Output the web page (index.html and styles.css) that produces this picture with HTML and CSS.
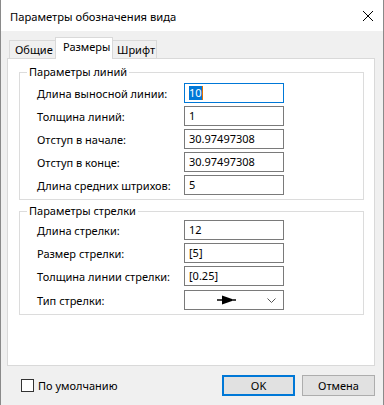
FILE: index.html
```html
<!DOCTYPE html>
<html lang="ru">
<head>
    <meta charset="UTF-8">
    <title>Параметры обозначения вида</title>
    <link rel="stylesheet" href="styles.css">
</head>
<body>

    <div class="window">
        <div class="titlebar">
            <span class="title">Параметры обозначения вида</span>
            <svg class="close" width="12" height="12" viewBox="0 0 12 12">
                <path d="M1 1 L11 11 M11 1 L1 11" stroke="#000" stroke-width="1" fill="none"/>
            </svg>
        </div>

        <div class="content">
            <!-- Tabs -->
            <div class="tabs">
                <div class="tab tab-first">Общие</div>
                <div class="tab active">Размеры</div>
                <div class="tab tab-last">Шрифт</div>
            </div>

            <div class="panel">
                <fieldset class="group group-lines">
                    <legend>Параметры линий</legend>
                    <div class="row">
                        <label>Длина выносной линии:</label>
                        <div class="field focused"><span class="selected">10</span><span class="caret"></span></div>
                    </div>
                    <div class="row">
                        <label>Толщина линий:</label>
                        <div class="field">1</div>
                    </div>
                    <div class="row">
                        <label>Отступ в начале:</label>
                        <div class="field">30.97497308</div>
                    </div>
                    <div class="row">
                        <label>Отступ в конце:</label>
                        <div class="field">30.97497308</div>
                    </div>
                    <div class="row">
                        <label>Длина средних штрихов:</label>
                        <div class="field">5</div>
                    </div>
                </fieldset>

                <fieldset class="group group-arrow">
                    <legend>Параметры стрелки</legend>
                    <div class="row">
                        <label>Длина стрелки:</label>
                        <div class="field">12</div>
                    </div>
                    <div class="row">
                        <label>Размер стрелки:</label>
                        <div class="field">[5]</div>
                    </div>
                    <div class="row">
                        <label>Толщина линии стрелки:</label>
                        <div class="field">[0.25]</div>
                    </div>
                    <div class="row row-combo">
                        <label>Тип стрелки:</label>
                        <div class="field combo">
                            <svg class="arrow-type" width="20" height="10" viewBox="0 0 20 10">
                                <path d="M0 5 H19" stroke="#000" stroke-width="1.5"/>
                                <path d="M5 0.5 L15 4 L15 6 L5 9.5 Z" fill="#000"/>
                            </svg>
                            <svg class="chevron" width="9" height="5" viewBox="0 0 9 5">
                                <path d="M0.5 0.5 L4.5 4.5 L8.5 0.5" stroke="#555" stroke-width="1" fill="none"/>
                            </svg>
                        </div>
                    </div>
                </fieldset>
            </div>

            <div class="footer">
                <div class="check">
                    <span class="box"></span>
                    <span>По умолчанию</span>
                </div>
                <div class="buttons">
                    <button class="btn default">OK</button>
                    <button class="btn">Отмена</button>
                </div>
            </div>
        </div>
    </div>

</body>
</html>
```

FILE: styles.css
```css
body {
    margin: 0;
    padding: 0;
    font-family: "Noto Sans", "Open Sans", sans-serif;
    font-size: 11px;
    color: #000;
    background-color: #f0f0f0;
}

.window {
    width: 384px;
    height: 405px;
    box-sizing: border-box;
    border-left: 1px solid #8a8a8a;
    border-right: 1px solid #8a8a8a;
    background-color: #f0f0f0;
    display: flex;
    flex-direction: column;
}

.titlebar {
    height: 31px;
    background-color: #fff;
    display: flex;
    align-items: center;
    justify-content: space-between;
    padding: 0 9px 0 9px;
}

.title {
    font-size: 11.2px;
    line-height: 15px;
    margin-top: 1px;
}

.close {
    display: block;
}

.content {
    padding: 0 8px 0 6px;
}

.tabs {
    display: flex;
    align-items: flex-end;
    height: 21px;
    margin-top: 6px;
    padding-left: 2px;
    position: relative;
    z-index: 1;
}

.tab {
    height: 18px;
    line-height: 18px;
    box-sizing: border-box;
    border: 1px solid #d9d9d9;
    border-bottom: none;
    background-color: #f0f0f0;
    white-space: nowrap;
}

.tab-first {
    width: 46px;
    padding-left: 5px;
    border-right: none;
}

.tab.active {
    width: 58px;
    height: 22px;
    margin-bottom: -1px;
    background-color: #fff;
    padding-left: 7px;
    line-height: 17px;
}

.tab-last {
    width: 44px;
    border-left: none;
    padding-left: 4px;
}

.panel {
    height: 308px;
    box-sizing: border-box;
    background-color: #fff;
    border: 1px solid #d9d9d9;
    padding: 6px 10px 0 11px;
}

.group {
    margin: 0;
    padding: 0 0 4px 17px;
    border: 1px solid #dcdcdc;
    min-width: 0;
}

.group legend {
    margin-left: -10px;
    padding: 0 2px;
    line-height: 14px;
}

.group-lines .row:first-of-type {
    margin-top: 4px;
}

.group-arrow {
    margin-top: 4px;
    padding-bottom: 4px;
}

.group-arrow .row:first-of-type {
    margin-top: 2px;
}

.row {
    display: flex;
    align-items: center;
    margin-top: 3px;
}

.row label {
    width: 147px;
    white-space: nowrap;
}

.row-combo {
    margin-top: 4px;
}

.field {
    width: 100px;
    height: 20px;
    box-sizing: border-box;
    border: 1px solid #7a7a7a;
    padding: 0 4px;
    line-height: 18px;
    background-color: #fff;
    display: flex;
    align-items: center;
}

.field.focused {
    border-color: #0078d7;
}

.selected {
    background-color: #0078d7;
    color: #fff;
    line-height: 14px;
}

.caret {
    width: 1px;
    height: 14px;
    background-color: #e07000;
}

.combo {
    position: relative;
    justify-content: center;
}

.arrow-type {
    display: block;
    margin-left: -14px;
}

.chevron {
    position: absolute;
    right: 7px;
    top: 7px;
}

.footer {
    display: flex;
    justify-content: space-between;
    align-items: center;
    margin-top: 9px;
    padding-left: 14px;
}

.check {
    display: flex;
    align-items: center;
    gap: 4px;
}

.box {
    width: 13px;
    height: 13px;
    box-sizing: border-box;
    border: 1px solid #333;
    background-color: #fff;
}

.buttons {
    display: flex;
    gap: 7px;
}

.btn {
    width: 73px;
    height: 21px;
    box-sizing: border-box;
    font-family: "Noto Sans", "Open Sans", sans-serif;
    font-size: 11px;
    background-color: #e1e1e1;
    border: 1px solid #adadad;
    padding: 0;
    color: #000;
}

.btn.default {
    border: 2px solid #0078d7;
}
```
